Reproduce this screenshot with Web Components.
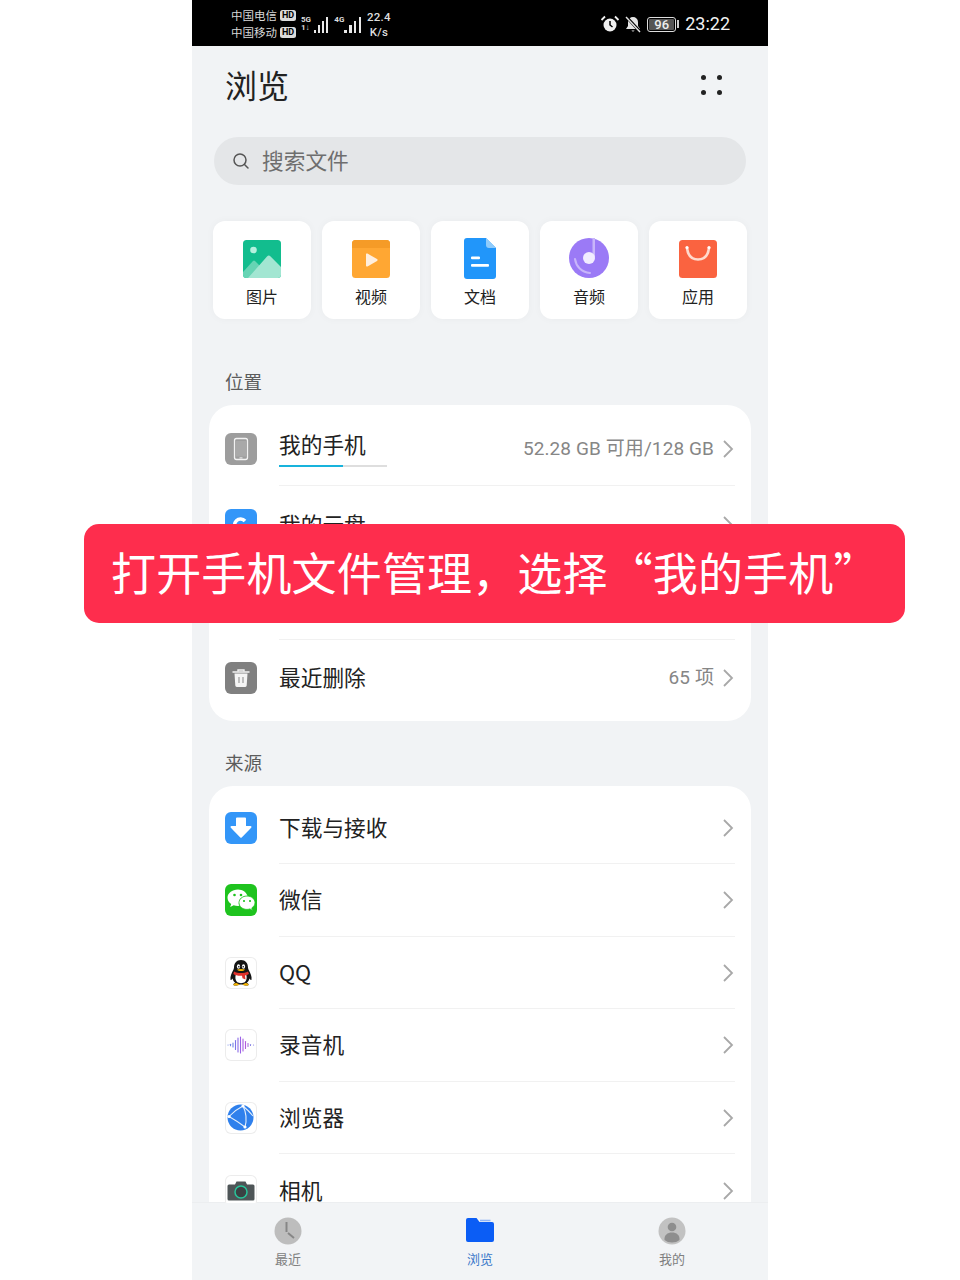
<!DOCTYPE html>
<html lang="zh-CN">
<head>
<meta charset="utf-8">
<title>浏览</title>
<style>
html,body{margin:0;padding:0;background:#fff}
body{font-family:"Noto Sans CJK SC","Noto Sans",sans-serif}
</style>
</head>
<body>
<app-screen>
  <status-bar slot="status"></status-bar>

  <title-bar>浏览</title-bar>
  <search-box>搜索文件</search-box>

  <tile-grid>
    <cat-tile label="图片"><svg viewBox="0 0 38 38" width="38" height="38"><defs><clipPath id="pc"><rect width="38" height="38" rx="3.500"/></clipPath></defs><g clip-path="url(#pc)"><rect width="38" height="38" fill="#12bd8e"/><circle cx="10.500" cy="10" r="3.300" fill="#b5f0de"/><path d="M-1 33l11-12a1.500 1.500 0 0 1 2 0l8 8-9 10H-1z" fill="#66d4b4"/><path d="M5 38l19-21.500a2.500 2.500 0 0 1 3.600 0L38 27v11z" fill="#a2e6d2"/></g></svg></cat-tile>
    <cat-tile label="视频"><svg viewBox="0 0 38 38" width="38" height="38"><rect width="38" height="38" rx="3.500" fill="#ffa733"/><path d="M0 8V3.500A3.500 3.500 0 0 1 3.500 0h31A3.500 3.500 0 0 1 38 3.500V8z" fill="#f59b27"/><path d="M14 14.500a1 1 0 0 1 1.500-.9l9.500 5.500a1 1 0 0 1 0 1.800l-9.500 5.500a1 1 0 0 1-1.500-.9z" fill="#ffeedd"/></svg></cat-tile>
    <cat-tile label="文档"><svg viewBox="0 0 32 41" width="32" height="41"><path d="M3 0h19l10 10v28a3 3 0 0 1-3 3H3a3 3 0 0 1-3-3V3a3 3 0 0 1 3-3z" fill="#2196fa"/><path d="M22 0l10 10h-7a3 3 0 0 1-3-3z" fill="#8fcbfb"/><rect x="7" y="18.500" width="9" height="2.800" rx="1" fill="#fff"/><rect x="7" y="26" width="18" height="2.800" rx="1" fill="#fff"/></svg></cat-tile>
    <cat-tile label="音频"><svg viewBox="0 0 40 40" width="40" height="40" style="margin-top:-1px"><circle cx="20" cy="20" r="20" fill="#9b7af6"/><path d="M6 21c1 7 6 13 15 14" fill="none" stroke="#c8b5fa" stroke-width="2" stroke-linecap="round"/><rect x="23.500" y="0" width="2.500" height="19" fill="#c8b5fa"/><circle cx="20" cy="20" r="6" fill="#f1ecff"/></svg></cat-tile>
    <cat-tile label="应用"><svg viewBox="0 0 38 38" width="38" height="38"><rect width="38" height="38" rx="3.500" fill="#fa6340"/><path d="M8 8c1 8 5 11.500 11 11.500S29 16 30 8" fill="none" stroke="#ffd9cc" stroke-width="2.600"/><circle cx="8" cy="7.500" r="1.600" fill="#fff"/><circle cx="30" cy="7.500" r="1.600" fill="#fff"/></svg></cat-tile>
  </tile-grid>

  <section-label style="--mt:50px">位置</section-label>
  <list-card>
    <list-row label="我的手机" value="52.28 GB 可用/128 GB" style="--h:81px;--pt:7px">
      <icon-box slot="icon" bg="#9d9d9d"><svg viewBox="0 0 32 32" width="32" height="32"><rect x="9.500" y="5.500" width="13" height="21" rx="2" fill="none" stroke="#f2f2f2" stroke-width="1.300"/><rect x="11" y="8" width="10" height="15.500" fill="#a9a9a9"/><rect x="14.500" y="24.400" width="3" height="1" fill="#f2f2f2"/></svg></icon-box>
      <progress-line slot="below"></progress-line>
    </list-row>
    <list-row label="我的云盘" style="--h:77px">
      <icon-box slot="icon" bg="#3396f8"><svg viewBox="0 0 32 32" width="32" height="32"><path d="M20 12a6 6 0 1 0 0 8" fill="none" stroke="#fff" stroke-width="3.500"/></svg></icon-box>
    </list-row>
    <list-row style="--h:77px"></list-row>
    <list-row label="最近删除" value="65 项" nosep style="--h:81px;--pb:5px">
      <icon-box slot="icon" bg="#808080"><svg viewBox="0 0 32 32" width="32" height="32"><path d="M7.500 10h17" stroke="#f5f5f5" stroke-width="1.600"/><path d="M13 9.500V8h6v1.500" fill="none" stroke="#f5f5f5" stroke-width="1.400"/><path d="M9.500 11.500h13l-.8 12a1.500 1.500 0 0 1-1.500 1.400h-8.400a1.500 1.500 0 0 1-1.500-1.400z" fill="#f5f5f5"/><path d="M14 15v6M18 15v6" stroke="#9a9a9a" stroke-width="1.200"/></svg></icon-box>
    </list-row>
  </list-card>

  <section-label style="--mt:29px">来源</section-label>
  <list-card>
    <list-row label="下载与接收" style="--h:78px;--pt:6px">
      <icon-box slot="icon" bg="#3396f8"><svg viewBox="0 0 32 32" width="32" height="32"><path d="M11 6.500a1 1 0 0 1 1-1h8a1 1 0 0 1 1 1V14h4.500a1 1 0 0 1 .7 1.700l-9.500 9.800a1 1 0 0 1-1.400 0l-9.500-9.800a1 1 0 0 1 .7-1.700H11z" fill="#fff"/></svg></icon-box>
    </list-row>
    <list-row label="微信" style="--h:72.800px">
      <icon-box slot="icon" bg="#1ec31e"><svg viewBox="0 0 32 32" width="32" height="32"><path d="M13 5.500c-6 0-10.500 3.700-10.500 8.300 0 2.600 1.400 4.800 3.700 6.300l-1 3 3.500-1.800c1.300.4 2.700.6 4.300.6l1.200-.1a7.500 7.500 0 0 1 8.400-9.700C21.400 8.300 17.600 5.500 13 5.500z" fill="#fff"/><path d="M30 18.700c0-3.800-3.600-6.700-8-6.700s-8 2.900-8 6.700 3.600 6.700 8 6.700c1 0 2-.2 2.900-.5l2.700 1.500-.8-2.500c1.900-1.200 3.200-3 3.200-5.200z" fill="#fff" stroke="#1ec31e" stroke-width=".8"/><circle cx="9.500" cy="11" r="1.300" fill="#1ec31e"/><circle cx="16" cy="11" r="1.300" fill="#1ec31e"/><circle cx="19" cy="17" r="1.100" fill="#1ec31e"/><circle cx="25" cy="17" r="1.100" fill="#1ec31e"/></svg></icon-box>
    </list-row>
    <list-row label="QQ" style="--h:72.300px">
      <icon-box slot="icon" bg="#fff" bordered><svg viewBox="0 0 32 32" width="32" height="32"><path d="M16 3c-4.500 0-7 3.300-7 7.500 0 1.200-.4 2-1 3-1.500 2.800-3 6-2.500 9 .2 1 1.200.4 2-1 .5 1.900 1.400 3.300 2.800 4.300C9 26.500 8 27.300 8.500 28c.8 1 4.500.7 6-.5h3c1.500 1.200 5.200 1.500 6 .5.500-.7-.5-1.500-1.800-2.200 1.400-1 2.300-2.400 2.800-4.300.8 1.400 1.800 2 2 1 .5-3-1-6.200-2.500-9-.6-1-1-1.800-1-3C23 6.300 20.500 3 16 3z" fill="#141414"/><path d="M11 17c-1 2.500-1 6 1 8 2 1.500 6 1.500 8 0 2-2 2-5.500 1-8z" fill="#fff"/><path d="M9 14.500c4 2 10 2 14 0l1 2.500c-1.500.8-3 1.300-4 1.500l.5 4-3-1.200-.5-2.500c-4 .2-7-.6-8.700-1.800z" fill="#e0312a"/><ellipse cx="13.500" cy="9.500" rx="1.600" ry="2.200" fill="#fff"/><ellipse cx="18.500" cy="9.500" rx="1.600" ry="2.200" fill="#fff"/><circle cx="13.800" cy="9.800" r=".8" fill="#111"/><circle cx="18.200" cy="9.800" r=".8" fill="#111"/><path d="M12 12.500c2-.8 6-.8 8 0-1.500 2-6.500 2-8 0z" fill="#f7b500"/><path d="M8.500 28c.8 1 4.500.7 6-.5l-3-1.500c-2 0-3.500 1.300-3 2zM23.500 28c-.8 1-4.500.7-6-.5l3-1.500c2 0 3.500 1.300 3 2z" fill="#f7b500"/></svg></icon-box>
    </list-row>
    <list-row label="录音机" style="--h:72.500px">
      <icon-box slot="icon" bg="#fff" bordered><svg viewBox="0 0 32 32" width="32" height="32" stroke-linecap="round" stroke-width="1.100"><path d="M3 16h.1" stroke="#7d8fe6"/><path d="M5.500 15.200v1.600" stroke="#6f83e6"/><path d="M8 14v4" stroke="#6f83e6"/><path d="M10.500 11.500v9" stroke="#7c74e8"/><path d="M13 9v14" stroke="#8a6be8"/><path d="M15.500 8v16" stroke="#9b63e6"/><path d="M18 10v12" stroke="#a85fe2"/><path d="M20.500 12.500v7" stroke="#b35ddc"/><path d="M23 14.500v3" stroke="#a872dc"/><path d="M25.500 15.500v1" stroke="#8b88e4"/><path d="M28.500 16h.1" stroke="#8b88e4"/></svg></icon-box>
    </list-row>
    <list-row label="浏览器" style="--h:72.800px">
      <icon-box slot="icon" bg="#fff" bordered><svg viewBox="0 0 32 32" width="32" height="32"><circle cx="15.500" cy="15.500" r="13" fill="#2f80ec"/><g stroke="#e3eefc" stroke-width="1.100" fill="none"><path d="M4 14.500Q10 8 18 4M4 14.500Q12 19 20 25M18 4Q23 14 20 25M18 4Q24 9 28 14"/></g><g fill="#fff"><circle cx="4" cy="14.500" r="1.600"/><circle cx="18" cy="4" r="1.600"/><circle cx="20" cy="25" r="1.600"/></g></svg></icon-box>
    </list-row>
    <list-row label="相机" style="--h:72.500px">
      <icon-box slot="icon" bg="#fff" bordered><svg viewBox="0 0 32 32" width="32" height="32"><path d="M4 9.500h6l1.500-3h9l1.500 3h6a1.500 1.500 0 0 1 1.500 1.500v13a1.500 1.500 0 0 1-1.500 1.500H4A1.500 1.500 0 0 1 2.500 24V11A1.500 1.500 0 0 1 4 9.500z" fill="#4e5557"/><circle cx="16" cy="17" r="6" fill="#3a4143" stroke="#27c59a" stroke-width="1.500"/></svg></icon-box>
    </list-row>
  </list-card>

  <tab-bar slot="tabs">
    <tab-item label="最近"><svg viewBox="0 0 28 28" width="28" height="28"><circle cx="14" cy="14" r="13.500" fill="#bdbdbd"/><path d="M12.500 5v10" stroke="#868686" stroke-width="2"/><path d="M14 16l6 5" stroke="#868686" stroke-width="2"/></svg></tab-item>
    <tab-item label="浏览" active><svg viewBox="0 0 28 28" width="28" height="28"><path d="M0 3a2 2 0 0 1 2-2h8.500l3 4H26a2 2 0 0 1 2 2v16a2 2 0 0 1-2 2H2a2 2 0 0 1-2-2z" fill="#0b5df5"/><path d="M14 3.500h10.500" stroke="#8fb4f7" stroke-width="1.600"/></svg></tab-item>
    <tab-item label="我的"><svg viewBox="0 0 28 28" width="28" height="28"><circle cx="14" cy="14" r="13.500" fill="#c2c2c2"/><circle cx="14" cy="10" r="4.300" fill="#8e8e8e"/><path d="M6.500 23c-.5-5 3-7.500 7.500-7.500s8 2.500 7.500 7.500c-2 1.700-4.500 2.500-7.500 2.500s-5.500-.8-7.500-2.500z" fill="#8e8e8e"/></svg></tab-item>
  </tab-bar>

  <caption-banner slot="overlay">打开手机文件管理，选择“我的手机”</caption-banner>
</app-screen>

<script>
const CJK = '"Noto Sans CJK SC","Noto Sans",sans-serif';
function make(name, html, setup){
  const t = document.createElement('template');
  t.innerHTML = html;
  customElements.define(name, class extends HTMLElement{
    constructor(){
      super();
      this.attachShadow({mode:'open'}).appendChild(t.content.cloneNode(true));
    }
    connectedCallback(){ if(setup) setup(this, this.shadowRoot); }
  });
}

make('app-screen', `<style>
:host{display:block;position:relative;width:960px;height:1280px;overflow:hidden;background:#fff;font-family:${CJK}}
.phone{width:576px;height:1280px;margin:0 auto;display:flex;flex-direction:column;background:#f1f3f5}
main{flex:1;min-height:0;overflow:hidden;display:flex;flex-direction:column}
.overlay{position:absolute;left:84px;top:524px}
</style>
<div class="phone">
  <slot name="status"></slot>
  <main><slot></slot></main>
  <slot name="tabs"></slot>
</div>
<div class="overlay"><slot name="overlay"></slot></div>`);

make('status-bar', `<style>
:host{display:flex;flex:none;align-items:center;height:46px;background:#000;color:#e6e6e6;padding:2px 38px 0 39px;box-sizing:border-box;font-family:${CJK}}
.carriers{display:flex;flex-direction:column;gap:3px;margin-top:-1px;font-size:11.500px;line-height:14px;color:#d8d8d8}
.carriers div{display:flex;align-items:center;gap:3px;white-space:nowrap}
.hd{display:inline-block;width:16px;height:11px;border-radius:2.500px;background:#dcdcdc;color:#000;font:700 9px/11px "Roboto",sans-serif;text-align:center}
.sig{display:flex;align-items:flex-end;margin-left:5px;height:17px}
.sig2{margin-left:6px}
.tech{width:13px;height:17px;font:700 8px/8px "Roboto",sans-serif;color:#ddd}
.sig2 .tech{width:10px}
.tech span{display:block}
.bars{display:flex;align-items:flex-end;gap:1.600px}
.sig2 .bars{gap:2.400px}
.bars i{display:block;width:2.400px;background:#e8e8e8}
.speed{margin:1px 0 0 6px;display:flex;flex-direction:column;align-items:center;font:500 11.500px/15px "Roboto",sans-serif;color:#ddd;letter-spacing:.2px}
.sp{flex:1}
.time{font:400 18px/24px "Roboto",sans-serif;color:#f2f2f2;margin-left:6px}
svg{display:block}
.batt{display:flex;align-items:center;gap:1px;margin-left:4px}
.cell{width:29px;height:15px;box-sizing:border-box;border:1px solid #ddd;border-radius:3px;padding:1px;display:flex}
.cell b{flex:1;background:#555;border-radius:1px;font:500 13px/11px "Roboto",sans-serif;color:#eee;text-align:center}
.tip{width:2px;height:8px;background:#ccc}
</style>
<div class="carriers"><div>中国电信<span class="hd">HD</span></div><div>中国移动<span class="hd">HD</span></div></div>
<div class="sig"><div class="tech"><span>5G</span><span>1↓</span></div><div class="bars"><i style="height:3px"></i><i style="height:8px"></i><i style="height:12px"></i><i style="height:16px"></i></div></div>
<div class="sig sig2"><div class="tech"><span>4G</span></div><div class="bars"><i style="height:3px"></i><i style="height:8px"></i><i style="height:12px"></i><i style="height:16px"></i></div></div>
<div class="speed"><span>22.4</span><span>K/s</span></div>
<div class="sp"></div>
<svg viewBox="0 0 20 20" width="20" height="20"><circle cx="10" cy="11" r="6.500" fill="#f0f0f0"/><path d="M10 7v4l2.500 2" fill="none" stroke="#000" stroke-width="1.500"/><path d="M1.500 6L5 2.500M18.500 6L15 2.500" stroke="#f0f0f0" stroke-width="1.800"/></svg>
<svg viewBox="0 0 20 20" width="20" height="20" style="margin-left:3px"><path d="M10 3a5 5 0 0 0-5 5v4l-2 3h14l-2-3V8a5 5 0 0 0-5-5z" fill="#e4e4e4"/><path d="M8.500 16.500a1.600 1.600 0 0 0 3 0z" fill="#e4e4e4"/><path d="M3 2.500l14 15" stroke="#000" stroke-width="3"/><path d="M3 3l14 15" stroke="#e4e4e4" stroke-width="1.400"/></svg>
<div class="batt"><div class="cell"><b>96</b></div><div class="tip"></div></div>
<div class="time">23:22</div>`);

make('title-bar', `<style>
:host{display:flex;flex:none;align-items:center;justify-content:space-between;height:80px;padding:0 46px 0 33px;font:400 32px/44px ${CJK};color:#222}
span{margin-bottom:4px}
.dots{display:grid;grid-template-columns:5px 5px;column-gap:11px;row-gap:10px;margin-bottom:2px}
.dots i{display:block;width:5px;height:5px;border-radius:50%;background:#222}
</style><span><slot></slot></span><div class="dots"><i></i><i></i><i></i><i></i></div>`);

make('search-box', `<style>
:host{display:flex;flex:none;align-items:center;gap:13px;height:48px;margin:11px 22px 0;padding-left:18px;border-radius:24px;background:#e4e6e8;font:400 21.700px/30px ${CJK};color:#6e6e6e}
svg{display:block}
span{margin:0 0 2px -1px}
</style><svg viewBox="0 0 18 18" width="18" height="18"><circle cx="8" cy="8" r="6" fill="none" stroke="#555" stroke-width="1.500"/><path d="M12.500 12.500L16 16" stroke="#555" stroke-width="1.500" stroke-linecap="round"/></svg><span><slot></slot></span>`);

make('tile-grid', `<style>
:host{display:grid;flex:none;grid-template-columns:repeat(5,98px);gap:11px;margin-top:36px;padding:0 21px}
</style><slot></slot>`);

make('cat-tile', `<style>
:host{display:flex;flex-direction:column;align-items:center;height:98px;box-sizing:border-box;background:#fff;border-radius:12px;box-shadow:0 0 8px rgba(0,0,0,.035);font:400 16px/22px ${CJK};color:#222}
.ic{height:41px;margin-top:17px;display:flex;align-items:center;justify-content:center}
.lb{margin-top:6px}
::slotted(svg){display:block}
</style><div class="ic"><slot></slot></div><div class="lb"></div>`, (el, sr)=>{ sr.querySelector('.lb').textContent = el.getAttribute('label'); });

make('section-label', `<style>
:host{display:block;flex:none;height:26px;margin-top:var(--mt,0);padding-left:33px;font:400 18.500px/24px ${CJK};color:#5c5c5c}
</style><slot></slot>`);

make('list-card', `<style>
:host{display:block;flex:none;margin:10px 17px 0;background:#fff;border-radius:24px;overflow:hidden}
</style><slot></slot>`);

make('icon-box', `<style>
:host{display:block;width:32px;height:32px;border-radius:6px;overflow:hidden;box-sizing:border-box}
:host([bordered]){box-shadow:inset 0 0 0 1px #ececec}
svg,::slotted(svg){display:block}
</style><slot></slot>`, (el)=>{ el.style.background = el.getAttribute('bg'); });

make('progress-line', `<style>
:host{display:block;width:108px;height:2px;margin-top:7px;background:#dedede}
div{width:64px;height:2px;background:#18b3dc}
</style><div></div>`);

make('list-row', `<style>
:host{display:flex;align-items:center;box-sizing:border-box;height:var(--h,73px);padding:var(--pt,0) 16px var(--pb,0) 16px;position:relative;font:400 21.700px/24px ${CJK};color:#222}
.icon{width:32px;height:32px;flex:none;margin-right:22px}
.txt{flex:1;display:flex;flex-direction:column}
.lb{display:block;padding-bottom:2px}
.val{font:400 19px/26px "Roboto",${CJK};color:#868686;letter-spacing:.1px;white-space:nowrap;margin-right:9px}
.chev{display:block;flex:none}
.sep{position:absolute;left:70px;right:16px;bottom:0;height:1px;background:#f1f1f1}
:host([nosep]) .sep{display:none}
</style>
<div class="icon"><slot name="icon"></slot></div>
<div class="txt"><span class="lb"></span><slot name="below"></slot></div>
<span class="val"></span>
<svg class="chev" viewBox="0 0 12 20" width="12" height="20"><path d="M1 2l8 8-8 8" fill="none" stroke="#a8a8a8" stroke-width="1.800"/></svg>
<div class="sep"></div>`, (el, sr)=>{
  const l = el.getAttribute('label'), v = el.getAttribute('value');
  sr.querySelector('.lb').textContent = l || '';
  sr.querySelector('.val').textContent = v || '';
  if(!l) sr.querySelector('.chev').style.visibility = 'hidden';
});

make('tab-bar', `<style>
:host{display:grid;flex:none;grid-template-columns:repeat(3,192px);height:77px;background:#f2f4f6;box-shadow:0 -1px 0 #eceef0}
</style><slot></slot>`);

make('tab-item', `<style>
:host{display:flex;flex-direction:column;align-items:center;padding-top:14px;box-sizing:border-box;font:400 13px/18px ${CJK};color:#808080}
:host([active]){color:#3a78c9}
.ic{height:28px}
.lb{margin-top:5px}
::slotted(svg){display:block}
</style><div class="ic"><slot></slot></div><div class="lb"></div>`, (el, sr)=>{ sr.querySelector('.lb').textContent = el.getAttribute('label'); });

make('caption-banner', `<style>
:host{display:block;width:821px;height:99px;box-sizing:border-box;padding-left:27px;background:#fe2d4d;border-radius:15px;color:#fff;font:400 45px/95px ${CJK};letter-spacing:.15px;white-space:nowrap;overflow:hidden}
</style><slot></slot>`);
</script>
</body>
</html>
